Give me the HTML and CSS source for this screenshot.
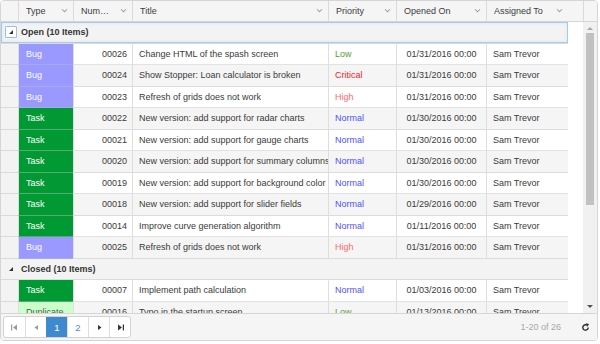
FILE: index.html
```html
<!DOCTYPE html>
<html lang="en">

<head>
    <meta charset="UTF-8">
    <meta name="viewport" content="width=device-width, initial-scale=1.0">
    <title>Issues Grid</title>
    <link rel="stylesheet" href="styles.css">
</head>

<body>
    <div class="grid">
        <div class="grid-header">
            <div class="th"></div>
            <div class="th"><span class="th-text">Type</span><span class="chev"></span></div>
            <div class="th"><span class="th-text short">Number</span><span class="chev"></span></div>
            <div class="th"><span class="th-text">Title</span><span class="chev"></span></div>
            <div class="th"><span class="th-text">Priority</span><span class="chev"></span></div>
            <div class="th"><span class="th-text">Opened On</span><span class="chev"></span></div>
            <div class="th"><span class="th-text">Assigned To</span><span class="chev"></span></div>
            <div class="th spacer"></div>
            <div class="th corner"></div>
        </div>

        <div class="grid-body">
            <div class="rows">
                <div class="group focused">
                    <span class="group-icon boxed"><span class="tri"></span></span>
                    Open (10 Items)
                </div>

                <div class="row">
                    <div class="td indent"></div>
                    <div class="td type bug">Bug</div>
                    <div class="td num">00026</div>
                    <div class="td">Change HTML of the spash screen</div>
                    <div class="td low">Low</div>
                    <div class="td date">01/31/2016 00:00</div>
                    <div class="td">Sam Trevor</div>
                </div>
                <div class="row alt">
                    <div class="td indent"></div>
                    <div class="td type bug">Bug</div>
                    <div class="td num">00024</div>
                    <div class="td">Show Stopper: Loan calculator is broken</div>
                    <div class="td critical">Critical</div>
                    <div class="td date">01/31/2016 00:00</div>
                    <div class="td">Sam Trevor</div>
                </div>
                <div class="row">
                    <div class="td indent"></div>
                    <div class="td type bug">Bug</div>
                    <div class="td num">00023</div>
                    <div class="td">Refresh of grids does not work</div>
                    <div class="td high">High</div>
                    <div class="td date">01/31/2016 00:00</div>
                    <div class="td">Sam Trevor</div>
                </div>
                <div class="row alt">
                    <div class="td indent"></div>
                    <div class="td type task">Task</div>
                    <div class="td num">00022</div>
                    <div class="td">New version: add support for radar charts</div>
                    <div class="td normal">Normal</div>
                    <div class="td date">01/30/2016 00:00</div>
                    <div class="td">Sam Trevor</div>
                </div>
                <div class="row">
                    <div class="td indent"></div>
                    <div class="td type task">Task</div>
                    <div class="td num">00021</div>
                    <div class="td">New version: add support for gauge charts</div>
                    <div class="td normal">Normal</div>
                    <div class="td date">01/30/2016 00:00</div>
                    <div class="td">Sam Trevor</div>
                </div>
                <div class="row alt">
                    <div class="td indent"></div>
                    <div class="td type task">Task</div>
                    <div class="td num">00020</div>
                    <div class="td">New version: add support for summary columns</div>
                    <div class="td normal">Normal</div>
                    <div class="td date">01/30/2016 00:00</div>
                    <div class="td">Sam Trevor</div>
                </div>
                <div class="row">
                    <div class="td indent"></div>
                    <div class="td type task">Task</div>
                    <div class="td num">00019</div>
                    <div class="td">New version: add support for background color</div>
                    <div class="td normal">Normal</div>
                    <div class="td date">01/30/2016 00:00</div>
                    <div class="td">Sam Trevor</div>
                </div>
                <div class="row alt">
                    <div class="td indent"></div>
                    <div class="td type task">Task</div>
                    <div class="td num">00018</div>
                    <div class="td">New version: add support for slider fields</div>
                    <div class="td normal">Normal</div>
                    <div class="td date">01/29/2016 00:00</div>
                    <div class="td">Sam Trevor</div>
                </div>
                <div class="row">
                    <div class="td indent"></div>
                    <div class="td type task">Task</div>
                    <div class="td num">00014</div>
                    <div class="td">Improve curve generation algorithm</div>
                    <div class="td normal">Normal</div>
                    <div class="td date">01/11/2016 00:00</div>
                    <div class="td">Sam Trevor</div>
                </div>
                <div class="row alt">
                    <div class="td indent"></div>
                    <div class="td type bug">Bug</div>
                    <div class="td num">00025</div>
                    <div class="td">Refresh of grids does not work</div>
                    <div class="td high">High</div>
                    <div class="td date">01/31/2016 00:00</div>
                    <div class="td">Sam Trevor</div>
                </div>

                <div class="group">
                    <span class="group-icon"><span class="tri"></span></span>
                    Closed (10 Items)
                </div>

                <div class="row">
                    <div class="td indent"></div>
                    <div class="td type task">Task</div>
                    <div class="td num">00007</div>
                    <div class="td">Implement path calculation</div>
                    <div class="td normal">Normal</div>
                    <div class="td date">01/03/2016 00:00</div>
                    <div class="td">Sam Trevor</div>
                </div>
                <div class="row alt">
                    <div class="td indent"></div>
                    <div class="td type duplicate">Duplicate</div>
                    <div class="td num">00016</div>
                    <div class="td">Typo in the startup screen</div>
                    <div class="td low">Low</div>
                    <div class="td date">01/13/2016 00:00</div>
                    <div class="td">Sam Trevor</div>
                </div>
            </div>

            <div class="scroll-gap"></div>

            <div class="scrollbar">
                <span class="arrow up"></span>
                <span class="thumb"></span>
                <span class="arrow down"></span>
            </div>
        </div>

        <div class="pager">
            <div class="pager-buttons">
                <span class="pbtn disabled">
                    <svg width="7" height="7" viewBox="0 0 7 7"><rect x="0" y="0.5" width="1.2" height="6" fill="currentColor"/><polygon points="6,0.5 6,6.5 2,3.5" fill="currentColor"/></svg>
                </span>
                <span class="pbtn disabled">
                    <svg width="7" height="7" viewBox="0 0 7 7"><polygon points="5,1 5,6 1.5,3.5" fill="currentColor"/></svg>
                </span>
                <span class="pbtn selected">1</span>
                <span class="pbtn page">2</span>
                <span class="pbtn">
                    <svg width="7" height="7" viewBox="0 0 7 7"><polygon points="2,1 2,6 5.5,3.5" fill="currentColor"/></svg>
                </span>
                <span class="pbtn">
                    <svg width="7" height="7" viewBox="0 0 7 7"><polygon points="1,0.5 1,6.5 5,3.5" fill="currentColor"/><rect x="5.8" y="0.5" width="1.2" height="6" fill="currentColor"/></svg>
                </span>
            </div>
            <div class="pager-info">1-20 of 26</div>
            <span class="refresh">
                <svg width="9" height="9" viewBox="0 0 10 10"><path d="M8 5 A3 3 0 1 1 6.5 2.4" fill="none" stroke="currentColor" stroke-width="1.6"/><polygon points="5.2,0.3 9,1.2 6.8,4.4" fill="currentColor"/></svg>
            </span>
        </div>
    </div>
</body>

</html>
```

FILE: styles.css
```css
* {
    margin: 0;
    padding: 0;
    box-sizing: border-box;
}

body {
    font-family: 'Liberation Sans', Arial, sans-serif;
    font-size: 9px;
    background-color: #fff;
    color: #333;
}

.grid {
    width: 598px;
    height: 341px;
    border: 1px solid #d5d5d5;
    border-radius: 4px;
    overflow: hidden;
    display: flex;
    flex-direction: column;
}

/* header */
.grid-header {
    display: grid;
    grid-template-columns: 17px 55px 59px 196px 68px 90px 82px 15px 14px;
    height: 21px;
    border-bottom: 1px solid #d5d5d5;
    background-color: #f5f5f5;
}

.th {
    display: flex;
    align-items: center;
    padding-left: 7px;
    border-left: 1px solid #dadada;
    color: #3c3c3c;
    white-space: nowrap;
}

.th:first-child,
.th.spacer {
    border-left: none;
}

.th-text {
    flex: 1;
    overflow: hidden;
}

.th-text.short {
    flex: none;
    max-width: 30px;
    text-overflow: ellipsis;
}

.th-text.short + .chev {
    margin-left: auto;
}

.chev {
    width: 5px;
    height: 5px;
    margin-right: 6px;
    margin-top: -3px;
    border-right: 1px solid #8a8a8a;
    border-bottom: 1px solid #8a8a8a;
    transform: rotate(45deg) scale(0.8);
}

/* body */
.grid-body {
    display: flex;
    height: 291px;
    overflow: hidden;
    background-color: #fff;
}

.rows {
    width: 567px;
    flex: none;
}

.scroll-gap {
    width: 15px;
    flex: none;
}

.row {
    display: grid;
    grid-template-columns: 17px 55px 59px 196px 68px 90px 82px;
    height: 21.5px;
    background-color: #fff;
}

.row.alt {
    background-color: #f5f5f5;
}

.td {
    display: flex;
    align-items: center;
    padding: 0 6px;
    border-left: 1px solid #dedede;
    border-bottom: 1px solid rgba(190, 190, 190, 0.45);
    white-space: nowrap;
    overflow: hidden;
    color: #3a3a3a;
}

.td.indent {
    border-left: none;
    background-color: #f3f3f3;
}

.td.num {
    justify-content: flex-end;
    padding-right: 5px;
}

.td.date {
    justify-content: center;
}

.type {
    padding-left: 7px;
}

.type.bug {
    background-color: #9999ff;
    color: #fff;
}

.type.task {
    background-color: #009933;
    color: #fff;
}

.type.duplicate {
    background-color: #ccffcc;
    color: #4a644a;
}

.low {
    color: #5a9e2f !important;
}

.critical {
    color: #f0202a !important;
}

.high {
    color: #ff6a6a !important;
}

.normal {
    color: #5050ff !important;
}

/* group rows */
.group {
    height: 21.5px;
    display: flex;
    align-items: center;
    gap: 4px;
    padding-left: 4px;
    font-weight: bold;
    color: #333;
    background-color: #f3f3f3;
    border-bottom: 1px solid rgba(190, 190, 190, 0.45);
}

.group.focused {
    box-shadow: inset 0 0 0 1px #a9cbea, inset 0 0 3px 1px #d4e6f6;
}

.group-icon {
    width: 12px;
    height: 12px;
    display: flex;
    align-items: center;
    justify-content: center;
    border: 1px solid transparent;
}

.group-icon.boxed {
    border-color: #9dbfe0;
    background-color: #fff;
    border-radius: 1px;
}

.tri {
    width: 0;
    height: 0;
    border-left: 4px solid transparent;
    border-bottom: 4px solid #333;
}

/* fake scrollbar */
.scrollbar {
    width: 14px;
    flex: none;
    display: flex;
    flex-direction: column;
    align-items: center;
    background-color: #f1f1f1;
}

.arrow {
    width: 0;
    height: 0;
    border-left: 3px solid transparent;
    border-right: 3px solid transparent;
}

.arrow.up {
    margin-top: 5px;
    border-bottom: 3px solid #a8a8a8;
}

.thumb {
    width: 8px;
    height: 172px;
    margin-top: 3px;
    background-color: #c1c1c1;
}

.arrow.down {
    margin-top: auto;
    margin-bottom: 5px;
    border-top: 3px solid #505050;
}

/* pager */
.pager {
    flex: 1;
    display: flex;
    align-items: center;
    padding: 0 6px 0 2px;
    border-top: 1px solid #d5d5d5;
    background-color: #f5f5f5;
}

.pager-buttons {
    display: flex;
    border: 1px solid #d2d2d2;
    border-radius: 3px;
    overflow: hidden;
    background-color: #fff;
}

.pbtn {
    width: 21px;
    height: 20px;
    display: flex;
    align-items: center;
    justify-content: center;
    border-left: 1px solid #dedede;
    color: #333;
    font-size: 9.5px;
}

.pbtn:first-child {
    border-left: none;
}

.pbtn.disabled {
    color: #9a9a9a;
}

.pbtn.selected {
    background-color: #3f8ace;
    border-left-color: #3f8ace;
    color: #fff;
}

.pbtn.page {
    color: #4a8fd0;
}

.pager-info {
    margin-left: auto;
    color: #a8a8a8;
    margin-right: 20px;
}

.refresh {
    display: flex;
    color: #333;
    margin-right: 1px;
}
```
